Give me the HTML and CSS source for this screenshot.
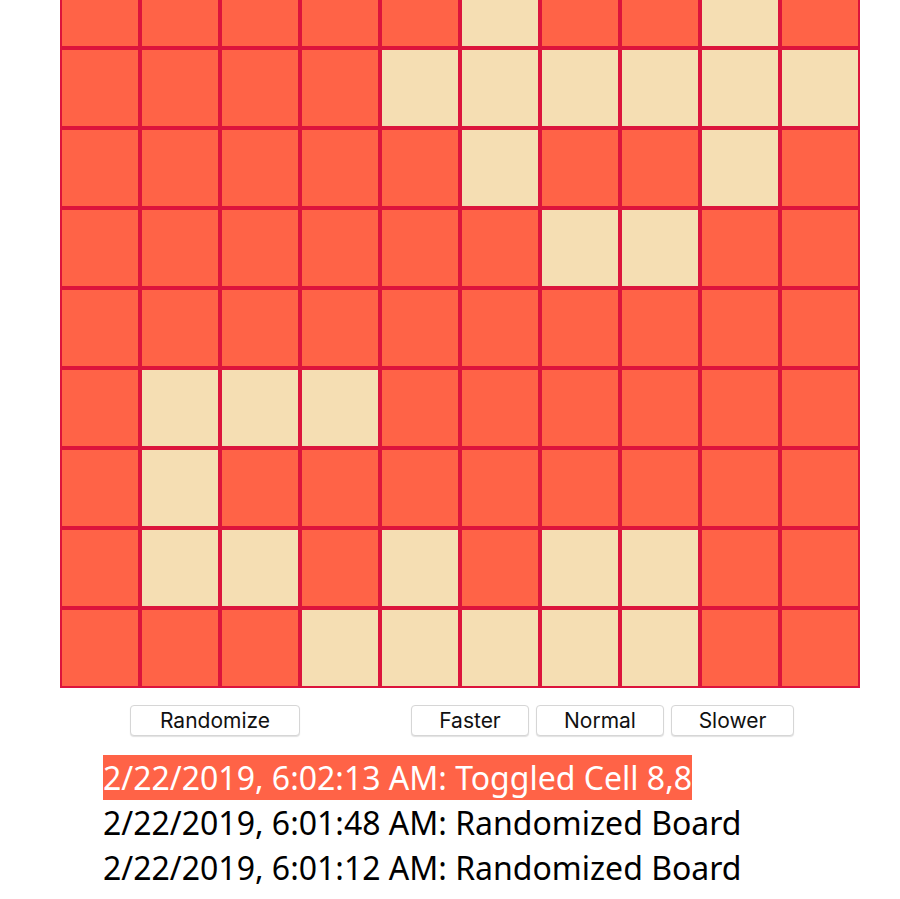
FILE: index.html
```html
<!DOCTYPE html>
<html lang="en">
<head>
  <meta charset="UTF-8">
  <meta name="viewport" content="width=device-width, initial-scale=1.0">
  <title>Game of Life</title>
  <link rel="stylesheet" href="styles.css">
</head>
<body>
  <div class="app">
    <div class="board" id="board"></div>
    <div class="controls">
      <button class="btn btn-randomize">Randomize</button>
      <div class="speed">
        <button class="btn btn-faster">Faster</button>
        <button class="btn btn-normal">Normal</button>
        <button class="btn btn-slower">Slower</button>
      </div>
    </div>
    <ul class="log">
      <li class="log-item latest">2/22/2019, 6:02:13 AM: Toggled Cell 8,8</li>
      <li class="log-item">2/22/2019, 6:01:48 AM: Randomized Board</li>
      <li class="log-item">2/22/2019, 6:01:12 AM: Randomized Board</li>
    </ul>
  </div>
  <script>
    // 1 = alive (wheat), 0 = dead (tomato)
    var rows = [
      "0000000000",
      "0000010010",
      "0000111111",
      "0000010010",
      "0000001100",
      "0000000000",
      "0111000000",
      "0100000000",
      "0110101100",
      "0001111100"
    ];

    var board = document.getElementById("board");
    rows.forEach(function(row) {
      for (var i = 0; i < row.length; i++) {
        var cell = document.createElement("div");
        cell.className = row[i] === "1" ? "cell alive" : "cell";
        board.appendChild(cell);
      }
    });
  </script>
</body>
</html>
```

FILE: styles.css
```css
body {
  margin: 0;
  padding: 0;
  background-color: #ffffff;
  font-family: "Noto Sans", Arial, sans-serif;
  overflow: hidden;
}

.app {
  padding-left: 60px;
}

/* page is scrolled down a bit, top row is out of view */
.board {
  display: grid;
  grid-template-columns: repeat(10, 80px);
  grid-auto-rows: 80px;
  width: 800px;
  margin-top: -112px;
}

.cell {
  box-sizing: border-box;
  border: 2px solid crimson;
  background-color: tomato;
}

.cell.alive {
  background-color: wheat;
}

.controls {
  display: flex;
  margin-top: 17px;
  padding-left: 70px;
}

.speed {
  display: flex;
  gap: 7px;
  margin-left: 111px;
}

.btn {
  box-sizing: border-box;
  height: 31px;
  padding: 0;
  border: 1px solid #d6d6d6;
  border-radius: 4px;
  background-color: #ffffff;
  box-shadow: 0 1px 1px rgba(0, 0, 0, 0.12);
  font-family: Inter, "Liberation Sans", Arial, sans-serif;
  font-size: 21px;
  color: #111111;
}

.btn-randomize { width: 170px; }
.btn-faster { width: 118px; }
.btn-normal { width: 128px; }
.btn-slower { width: 123px; }

.log {
  list-style: none;
  margin: 19px 0 0 0;
  padding-left: 43px;
}

.log-item {
  width: fit-content;
  font-size: 32px;
  line-height: 45px;
  color: #000000;
}

.log-item.latest {
  background-color: tomato;
  color: #ffffff;
}
```
